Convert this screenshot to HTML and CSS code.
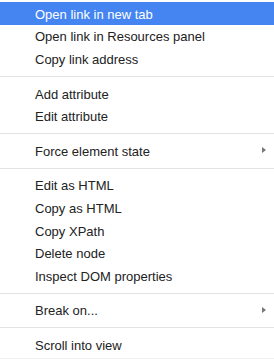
FILE: index.html
```html
<!DOCTYPE html>
<html lang="en">
<head>
  <meta charset="UTF-8" />
  <meta name="viewport" content="width=device-width, initial-scale=1.0"/>
  <title>Context menu</title>
  <link rel="stylesheet" href="styles.css">
</head>
<body>
  <ul class="menu">
    <li class="item active">Open link in new tab</li>
    <li class="item">Open link in Resources panel</li>
    <li class="item">Copy link address</li>
    <li class="sep"></li>
    <li class="item">Add attribute</li>
    <li class="item">Edit attribute</li>
    <li class="sep"></li>
    <li class="item sub">Force element state</li>
    <li class="sep"></li>
    <li class="item">Edit as HTML</li>
    <li class="item">Copy as HTML</li>
    <li class="item">Copy XPath</li>
    <li class="item">Delete node</li>
    <li class="item">Inspect DOM properties</li>
    <li class="sep"></li>
    <li class="item sub">Break on...</li>
    <li class="sep"></li>
    <li class="item">Scroll into view</li>
  </ul>
</body>
</html>
```

FILE: styles.css
```css
* {
  margin: 0;
  padding: 0;
  box-sizing: border-box;
}

body {
  background: white;
  font-family: "Liberation Sans", Arial, sans-serif;
  font-size: 13px;
  color: #222;
}

.menu {
  list-style: none;
  padding: 2px 0 2px;
  border-bottom: 3px solid #f0f0f0;
}

.item {
  display: flex;
  justify-content: space-between;
  align-items: center;
  height: 22.6px;
  line-height: 20px;
  padding: 3px 8px 0 35px;
  white-space: nowrap;
}

.active {
  background-color: #4585f2;
  color: white;
}

.sub::after {
  content: "";
  margin-top: -3px;
  border-left: 4px solid #777;
  border-top: 3.5px solid transparent;
  border-bottom: 3.5px solid transparent;
}

.sep {
  height: 12px;
  padding-top: 6px;
}

.sep::before {
  content: "";
  display: block;
  height: 1px;
  background-color: #e3e3e3;
}
```
